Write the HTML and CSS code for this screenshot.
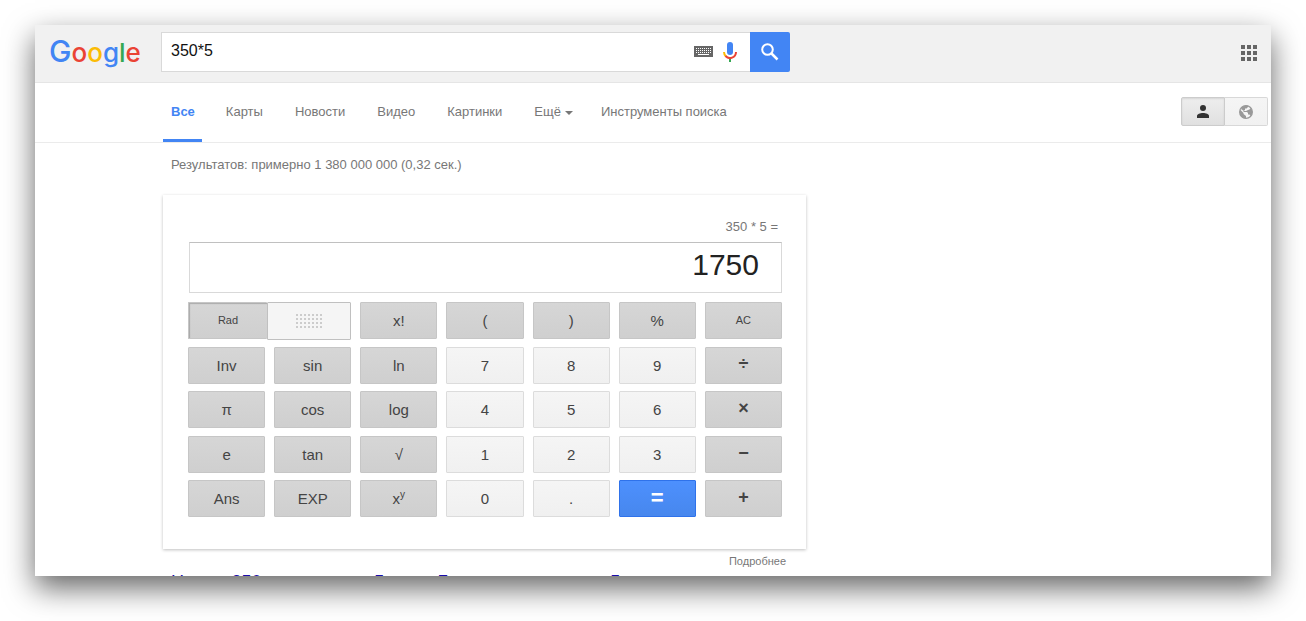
FILE: index.html
```html
<!DOCTYPE html>
<html lang="ru">
<head>
<meta charset="utf-8">
<title>350*5</title>
<link rel="stylesheet" href="styles.css">
</head>
<body>
<div class="window">
  <header class="topbar">
    <a class="logo" href="#" aria-label="Google"><span class="logo-cap blue">G</span><span class="red">o</span><span class="yellow">o</span><span class="blue">g</span><span class="green">l</span><span class="red">e</span></a>
    <form class="search">
      <div class="search-box">
        <input class="search-input" type="text" value="350*5" aria-label="Поиск">
        <button class="icon-button" type="button" aria-label="Клавиатура">
          <svg width="19" height="11" viewBox="0 0 19 11"><path fill="#666" d="M0 0h19v11H0z"/><path stroke="#fff" stroke-dasharray="1 1" d="M2 2.500h15M2 4.500h15M2 6.500h15"/><path stroke="#fff" d="M4 8.500h11"/></svg>
        </button>
        <button class="icon-button" type="button" aria-label="Голосовой поиск">
          <svg width="14" height="20" viewBox="0 0 14 20"><rect x="4" width="6" height="13" rx="3" fill="#4285f4"/><path fill="#34a853" d="M6 16h2v4H6z"/><path fill="none" stroke="#fbbc05" stroke-width="2" d="M1 10a6 6 0 0 0 2 4.500"/><path fill="none" stroke="#ea4335" stroke-width="2" d="M2.500 14A6 6 0 0 0 13 10"/></svg>
        </button>
      </div>
      <button class="search-button" type="submit" aria-label="Найти">
        <svg width="18" height="18" viewBox="0 0 18 18" fill="none" stroke="#fff"><circle cx="6.500" cy="6.500" r="5.300" stroke-width="2"/><path stroke-width="2.500" d="M10.500 10.500l6 6"/></svg>
      </button>
    </form>
    <button class="icon-button apps" type="button" aria-label="Приложения">
      <svg width="16" height="16" viewBox="0 0 16 16" fill="#666"><path d="M0 0h4v4H0zM6 0h4v4H6zM12 0h4v4h-4zM0 6h4v4H0zM6 6h4v4H6zM12 6h4v4h-4zM0 12h4v4H0zM6 12h4v4H6zM12 12h4v4h-4z"/></svg>
    </button>
  </header>

  <nav class="tabs">
    <a class="tab active" href="#">Все</a>
    <a class="tab" href="#">Карты</a>
    <a class="tab" href="#">Новости</a>
    <a class="tab" href="#">Видео</a>
    <a class="tab" href="#">Картинки</a>
    <a class="tab menu" href="#">Ещё<span class="caret"></span></a>
    <a class="tab" href="#">Инструменты поиска</a>
    <div class="scope">
      <button class="scope-button pressed" type="button" aria-label="Личные результаты">
        <svg width="12" height="13" viewBox="0 0 12 13" fill="#333"><circle cx="6" cy="3" r="3"/><path d="M0 13v-2c0-2 3-3 6-3s6 1 6 3v2z"/></svg>
      </button>
      <button class="scope-button" type="button" aria-label="Все результаты">
        <svg width="14" height="14" viewBox="0 0 14 14"><circle cx="7" cy="7" r="6.400" fill="#f5f5f5" stroke="#999" stroke-width="1.200"/><path fill="#999" d="M1 4.500L4.500 8v1L7 11v2.500L4 13 1 10zM3 2l3-1.500h3V2L7.500 3.500H6V5L4.500 6v1H8l1 1v1.500h1.500l1 1.500L13 9V5l-1.500-2-1 1.500L9 5 7 6H5L2 4z"/></svg>
      </button>
    </div>
  </nav>

  <main class="results">
    <p class="stats">Результатов: примерно 1 380 000 000 (0,32 сек.)</p>
    <section class="card">
      <p class="expression">350 * 5 =</p>
      <output class="display">1750</output>
      <div class="keys">
        <div class="mode">
          <button class="key small rad" type="button">Rad</button>
          <button class="key light deg" type="button" aria-label="Deg">
            <svg width="26" height="14" viewBox="0 0 26 14"><path stroke="#ccc" stroke-width="2" stroke-dasharray="2 2" d="M0 1h26M0 5h26M0 9h26M0 13h26"/></svg>
          </button>
        </div>
        <button class="key" type="button">x!</button>
        <button class="key" type="button">(</button>
        <button class="key" type="button">)</button>
        <button class="key" type="button">%</button>
        <button class="key small" type="button">AC</button>

        <button class="key" type="button">Inv</button>
        <button class="key" type="button">sin</button>
        <button class="key" type="button">ln</button>
        <button class="key light" type="button">7</button>
        <button class="key light" type="button">8</button>
        <button class="key light" type="button">9</button>
        <button class="key operator" type="button">÷</button>

        <button class="key" type="button">π</button>
        <button class="key" type="button">cos</button>
        <button class="key" type="button">log</button>
        <button class="key light" type="button">4</button>
        <button class="key light" type="button">5</button>
        <button class="key light" type="button">6</button>
        <button class="key operator" type="button">×</button>

        <button class="key" type="button">e</button>
        <button class="key" type="button">tan</button>
        <button class="key" type="button">√</button>
        <button class="key light" type="button">1</button>
        <button class="key light" type="button">2</button>
        <button class="key light" type="button">3</button>
        <button class="key operator" type="button">−</button>

        <button class="key" type="button">Ans</button>
        <button class="key" type="button">EXP</button>
        <button class="key" type="button">x<sup>y</sup></button>
        <button class="key light" type="button">0</button>
        <button class="key light" type="button">.</button>
        <button class="key equals" type="button">=</button>
        <button class="key operator" type="button">+</button>
      </div>
    </section>
    <a class="more" href="#">Подробнее</a>
    <a class="result-link" href="#">Номер 350 умножаются 5 раз и Б, ответы на вопрос 5</a>
  </main>
</div>
</body>
</html>
```
FILE: styles.css
```css
* {
  box-sizing: border-box;
}

body {
  display: flex;
  height: 100vh;
  margin: 0;
  padding: 25px 35px 45px;
  overflow: hidden;
  background: #fff;
  font-family: "Liberation Sans", Arial, sans-serif;
  font-size: 13px;
  color: #777;
}

button,
input {
  margin: 0;
  padding: 0;
  font-family: inherit;
}

a {
  color: inherit;
  text-decoration: none;
}

p {
  margin: 0;
}

svg {
  display: block;
}

.window {
  flex: 1;
  overflow: hidden;
  background: #fff;
  box-shadow: 0 12px 28px rgba(0, 0, 0, 0.6);
}

.topbar {
  display: flex;
  align-items: center;
  height: 58px;
  padding: 0 14px 4px;
  border-bottom: 1px solid #e5e5e5;
  background: #f1f1f1;
}

.logo {
  width: 112px;
  font-family: Inter, sans-serif;
  font-size: 26px;
  font-weight: 500;
  line-height: 40px;
  white-space: nowrap;
}

.logo-cap {
  font-size: 30px;
}

.blue {
  color: #4285f4;
}

.red {
  color: #ea4335;
}

.yellow {
  color: #fbbc05;
}

.green {
  color: #34a853;
}

.search {
  display: flex;
  flex: 0 1 629px;
  height: 40px;
}

.search-box {
  display: flex;
  flex: 1;
  align-items: center;
  gap: 10px;
  padding: 0 13px 0 9px;
  border: 1px solid #d9d9d9;
  border-right: 0;
  background: #fff;
}

.search-input {
  flex: 1;
  min-width: 0;
  height: 36px;
  padding-bottom: 2px;
  border: 0;
  outline: 0;
  background: none;
  font-size: 16px;
  color: #111;
}

.icon-button {
  border: 0;
  background: none;
}

.search-button {
  display: grid;
  place-items: center;
  width: 40px;
  border: 0;
  border-radius: 0 2px 2px 0;
  background: #4285f4;
}

.apps {
  margin-left: auto;
  padding-top: 2px;
}

.tabs {
  display: flex;
  align-items: center;
  gap: 16px;
  height: 60px;
  padding: 0 3px 0 128px;
  border-bottom: 1px solid #ebebeb;
}

.tab {
  padding: 2px 8px 0;
  border-bottom: 3px solid transparent;
  line-height: 54px;
  white-space: nowrap;
}

.active {
  padding-right: 7px;
  border-color: #4285f4;
  font-weight: bold;
  color: #4285f4;
}

.menu {
  padding-right: 4px;
}

.caret {
  display: inline-block;
  margin-left: 4px;
  border: 4px solid transparent;
  border-top-color: #777;
  border-bottom: 0;
  vertical-align: middle;
}

.scope {
  display: flex;
  margin-left: auto;
  padding-bottom: 2px;
}

.scope-button {
  display: grid;
  place-items: center;
  width: 43px;
  height: 29px;
  border: 1px solid #d8d8d8;
  border-left: 0;
  border-radius: 0 2px 2px 0;
  background: linear-gradient(#f5f5f5, #f1f1f1);
}

.scope-button.pressed {
  width: 44px;
  border: 1px solid #ccc;
  border-radius: 2px 0 0 2px;
  background: linear-gradient(#eee, #e0e0e0);
  box-shadow: inset 0 1px 2px rgba(0, 0, 0, 0.1);
}

.results {
  display: flex;
  flex-direction: column;
  width: 643px;
  max-width: 100%;
  margin-left: 128px;
}

.stats {
  padding: 0 8px;
  line-height: 43px;
}

.card {
  margin-top: 9px;
  padding: 24px 24px 32px 25px;
  box-shadow: 0 1px 3px rgba(0, 0, 0, 0.25);
}

.expression {
  padding-right: 4px;
  line-height: 16px;
  text-align: right;
}

.display {
  display: block;
  height: 51px;
  margin: 7px 0 9px 1px;
  padding-right: 22px;
  border: 1px solid #d9d9d9;
  border-top-color: #c0c0c0;
  font-size: 30px;
  line-height: 44px;
  text-align: right;
  color: #222;
}

.keys {
  display: grid;
  grid-template-columns: repeat(7, 1fr);
  grid-template-rows: repeat(5, 37px);
  align-content: space-between;
  column-gap: 9px;
  height: 215px;
}

.key {
  border: 1px solid #c6c6c6;
  border-radius: 1px;
  background: linear-gradient(#d6d6d6, #cfcfcf);
  font-size: 15px;
  line-height: 35px;
  color: #444;
}

.key sup {
  font-size: 10px;
  line-height: 0;
}

.key.light {
  border-color: #dcdcdc;
  background: linear-gradient(#f5f5f5, #f0f0f0);
}

.key.small {
  font-size: 11px;
}

.key.operator {
  padding-bottom: 2px;
  font-size: 18px;
  font-weight: bold;
  line-height: 33px;
}

.key.equals {
  padding-bottom: 2px;
  border-color: #2f72ea;
  background: linear-gradient(#4d90fe, #4787ed);
  font-size: 22px;
  font-weight: bold;
  line-height: 33px;
  color: #fff;
}

.mode {
  display: flex;
  grid-column: span 2;
}

.key.rad {
  width: 79px;
  border-right: 0;
  box-shadow: inset 1px 1px 1px rgba(0, 0, 0, 0.2);
}

.key.deg {
  display: grid;
  flex: 1;
  place-items: center;
  height: 38px;
  border-color: #c0c0c0;
  background: #f5f5f5;
}

.more {
  align-self: flex-end;
  padding-right: 20px;
  font-size: 11px;
  line-height: 24px;
}

.result-link {
  padding-left: 8px;
  font-size: 18px;
  line-height: 18px;
  white-space: nowrap;
  color: #1a0dab;
}
```
